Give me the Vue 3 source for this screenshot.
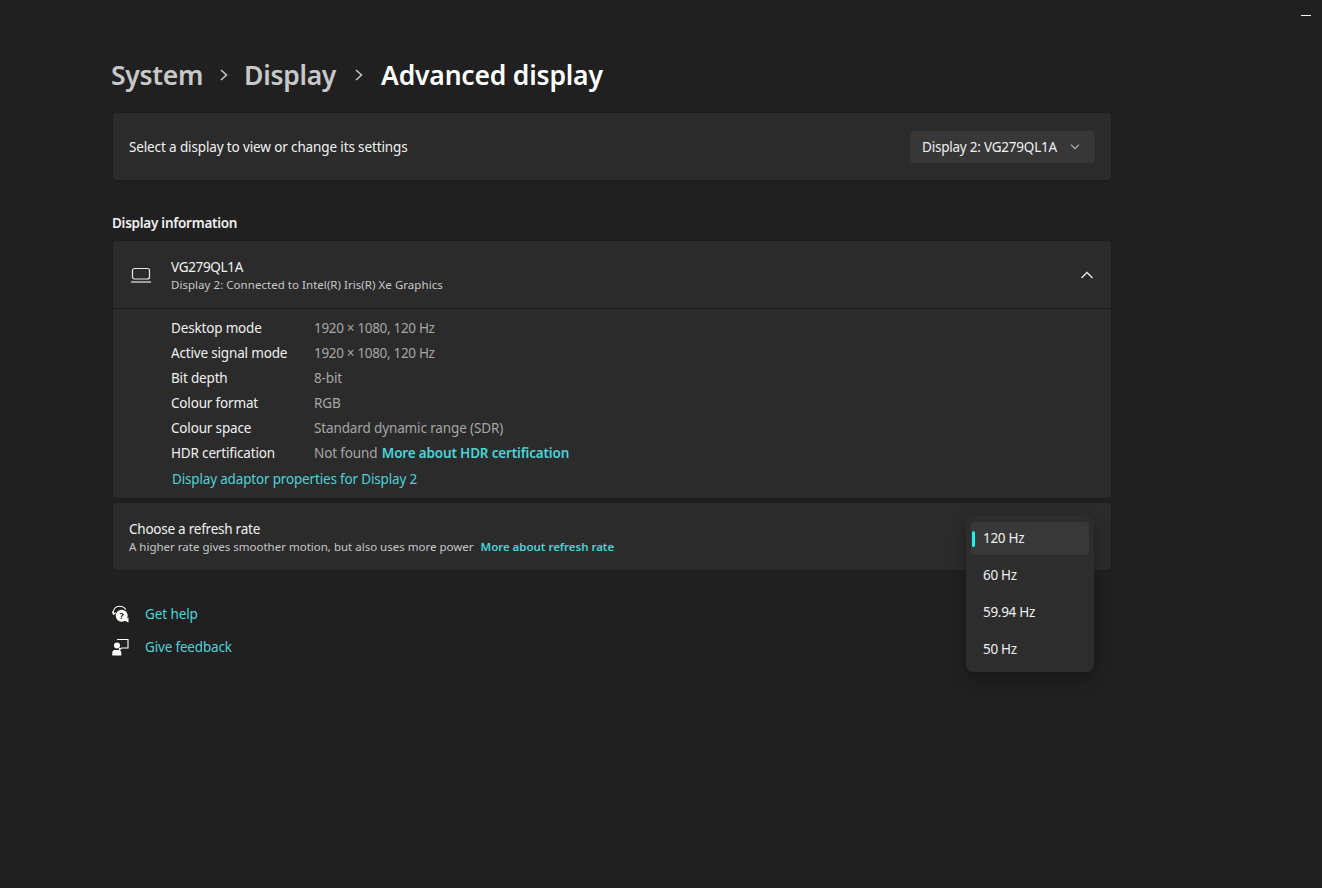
<script setup>
const info = [
  { key: 'Desktop mode', val: '1920 × 1080, 120 Hz', num: true },
  { key: 'Active signal mode', val: '1920 × 1080, 120 Hz', num: true },
  { key: 'Bit depth', val: '8-bit' },
  { key: 'Colour format', val: 'RGB' },
  { key: 'Colour space', val: 'Standard dynamic range (SDR)' },
]
const rates = ['120 Hz', '60 Hz', '59.94 Hz', '50 Hz']
</script>

<template>
  <div class="page">
    <div class="minimize"></div>
    <main class="content">
      <h1 class="crumbs">
        <span class="crumb">System</span>
        <svg class="sep" width="10" height="12" viewBox="0 0 10 12"><path d="M2 1 7.500 6 2 11" /></svg>
        <span class="crumb">Display</span>
        <svg class="sep last" width="10" height="12" viewBox="0 0 10 12"><path d="M2 1 7.500 6 2 11" /></svg>
        <span class="crumb current">Advanced display</span>
      </h1>

      <section class="card select-card">
        <span class="label">Select a display to view or change its settings</span>
        <div class="combo">
          <span>Display 2: VG279QL1A</span>
          <svg width="10" height="6" viewBox="0 0 10 6"><path d="M1 .7 5 4.700 9 .7" /></svg>
        </div>
      </section>

      <h2 class="section-title">Display information</h2>

      <section class="card info-card">
        <header class="info-head">
          <svg class="laptop" width="22" height="16" viewBox="0 0 22 16">
            <rect x="2.500" y="1.500" width="17" height="10.500" rx="2" />
            <path d="M1 15h20" />
          </svg>
          <div class="head-text">
            <div class="label name">VG279QL1A</div>
            <div class="sub conn">Display 2: Connected to Intel(R) Iris(R) Xe Graphics</div>
          </div>
          <svg class="caret" width="14" height="8" viewBox="0 0 14 8"><path d="M1.500 7 7 1.500 12.500 7" /></svg>
        </header>
        <div class="info-body">
          <div v-for="row in info" :key="row.key" class="row">
            <span class="key">{{ row.key }}</span>
            <span class="val" :class="{ num: row.num }">{{ row.val }}</span>
          </div>
          <div class="row">
            <span class="key">HDR certification</span>
            <span class="val">Not found <b class="link strong hdr">More about HDR certification</b></span>
          </div>
          <div class="adaptor link">Display adaptor properties for Display 2</div>
        </div>
      </section>

      <section class="card rate-card">
        <div class="rate-text">
          <div class="label choose">Choose a refresh rate</div>
          <div class="sub">A higher rate gives smoother motion, but also uses more power <b class="link strong more">More about refresh rate</b></div>
        </div>
        <div class="menu">
          <div v-for="(r, i) in rates" :key="r" class="option" :class="{ selected: i === 0 }">{{ r }}</div>
        </div>
      </section>

      <nav class="help">
        <div class="help-row">
          <svg width="18" height="18" viewBox="0 0 18 18">
            <path class="line" d="M1.300 8.500C1 4.200 3.500 1.200 7.500 1.200c2.800 0 5 1.200 6.300 3.300" />
            <path class="line" d="M.5 6.500l1 2.800 2.300-1.600" />
            <circle class="fill" cx="9.700" cy="10.700" r="6" />
            <path class="fill" d="M12 15.500l4.500 2v-5z" />
            <text x="9.700" y="13.800" class="q">?</text>
          </svg>
          <span class="link">Get help</span>
        </div>
        <div class="help-row">
          <svg width="18" height="18" viewBox="0 0 18 18">
            <path class="line" d="M5 1.500h11v8.500H9.500l-2 2v-2" />
            <circle class="fill" cx="5" cy="7.500" r="3" />
            <path class="fill" d="M.3 17.500v-3c0-1.500 1-2.500 2.500-2.500h4c1.500 0 2.500 1 2.500 2.500v3z" />
          </svg>
          <span class="link feedback">Give feedback</span>
        </div>
      </nav>
    </main>
  </div>
</template>

<style>
html, body { margin: 0; background: #202020; }
</style>

<style scoped>
.page {
  position: relative;
  height: 888px;
  overflow: hidden;
  background: #202020;
  color: #fff;
  font-family: "Noto Sans", "Open Sans", sans-serif;
  font-size: 13.500px;
  letter-spacing: -.13px;
  box-sizing: border-box;
  padding: 53px 0 0 112px;
}
.minimize {
  position: absolute;
  top: 15px;
  left: 1301px;
  width: 10px;
  height: 1px;
  background: #fff;
}
.content { width: 999px; }
.crumbs {
  display: flex;
  align-items: center;
  height: 44px;
  margin: 0 0 16px -1px;
  font-size: 26.500px;
  font-weight: 600;
  line-height: 44px;
  letter-spacing: -.3px;
}
.crumb { color: #c8c8c8; }
.crumb.current { color: #fff; letter-spacing: -.2px; }
.sep { margin: 0 15px 0 16px; }
.sep.last { margin: 0 17px 0 18px; }
.sep path { fill: none; stroke: #c8c8c8; stroke-width: 1.500; }
.card {
  margin-left: 1px;
  width: 998px;
  box-sizing: border-box;
  background: #2b2b2b;
  border-radius: 4px;
  box-shadow: 0 0 0 1px #1c1c1c;
}
.select-card, .rate-card {
  position: relative;
  display: flex;
  align-items: center;
  justify-content: space-between;
  height: 67px;
  padding: 0 16px;
}
.label { color: #f2f2f2; }
.choose { letter-spacing: -.24px; }
.name { letter-spacing: -.33px; margin-bottom: -1px; }
.combo {
  display: flex;
  align-items: center;
  justify-content: space-between;
  width: 185px;
  height: 32px;
  box-sizing: border-box;
  padding: 0 15px 0 12px;
  background: #373737;
  border-radius: 4px;
  white-space: nowrap;
  color: #f0f0f0;
  letter-spacing: -.22px;
}
.combo svg path { fill: none; stroke: #b4b4b4; stroke-width: 1.100; }
.section-title {
  margin: 34px 0 9px;
  font-size: 13.500px;
  line-height: 18px;
  font-weight: 600;
  color: #f0f0f0;
  letter-spacing: -.26px;
}
.info-head {
  display: flex;
  align-items: center;
  height: 67px;
  padding: 0 17px;
  border-bottom: 1px solid #1c1c1c;
}
.laptop { margin-right: 19px; }
.laptop rect, .laptop path { fill: none; stroke: #e8e8e8; stroke-width: 1.200; }
.head-text { flex: 1; padding-top: 2px; }
.head-text .label { line-height: 19px; }
.sub {
  font-size: 11.500px;
  line-height: 17px;
  color: #c8c8c8;
  letter-spacing: 0;
}
.sub.conn { letter-spacing: .04px; }
.caret path { fill: none; stroke: #ececec; stroke-width: 1.300; }
.info-body {
  height: 189px;
  box-sizing: border-box;
  padding: 7px 58px 0;
}
.row {
  display: flex;
  height: 25px;
  line-height: 25px;
}
.key { width: 143px; color: #f0f0f0; letter-spacing: -.17px; flex: none; }
.val { color: #a6a6a6; }
.val.num { letter-spacing: -.32px; }
.link { color: #4dd2d8; }
.strong { font-weight: 600; letter-spacing: -.17px; }
.hdr { margin-left: 1px; }
.sub .strong { letter-spacing: -.03px; }
.adaptor { margin: 1px 0 0 1px; line-height: 25px; letter-spacing: -.17px; }
.rate-card { margin-top: 5px; }
.rate-text { padding-top: 2px; }
.more { margin-left: 4px; }
.menu {
  position: absolute;
  top: 13px;
  left: 853px;
  width: 128px;
  height: 156px;
  box-sizing: border-box;
  padding: 6px 5px;
  background: #2d2d2d;
  border-radius: 8px;
  box-shadow: 0 6px 16px rgba(0, 0, 0, .3);
  letter-spacing: -.3px;
}
.option {
  position: relative;
  height: 33px;
  margin-bottom: 4px;
  padding-left: 12px;
  line-height: 33px;
  border-radius: 4px;
  color: #f0f0f0;
}
.option.selected { background: #383838; }
.option.selected::before {
  content: "";
  position: absolute;
  left: 1px;
  top: 9px;
  width: 3px;
  height: 16px;
  border-radius: 2px;
  background: #1ff2f2;
}
.help { margin-top: 27px; }
.help-row {
  display: flex;
  align-items: center;
  gap: 15px;
  height: 33px;
}
.help .link { letter-spacing: -.1px; }
.help .feedback { letter-spacing: -.17px; }
.help .line { fill: none; stroke: #fff; stroke-width: 1.100; }
.help .fill { fill: #fff; }
.q { font-size: 9px; font-weight: 700; fill: #202020; text-anchor: middle; letter-spacing: 0; }
</style>
